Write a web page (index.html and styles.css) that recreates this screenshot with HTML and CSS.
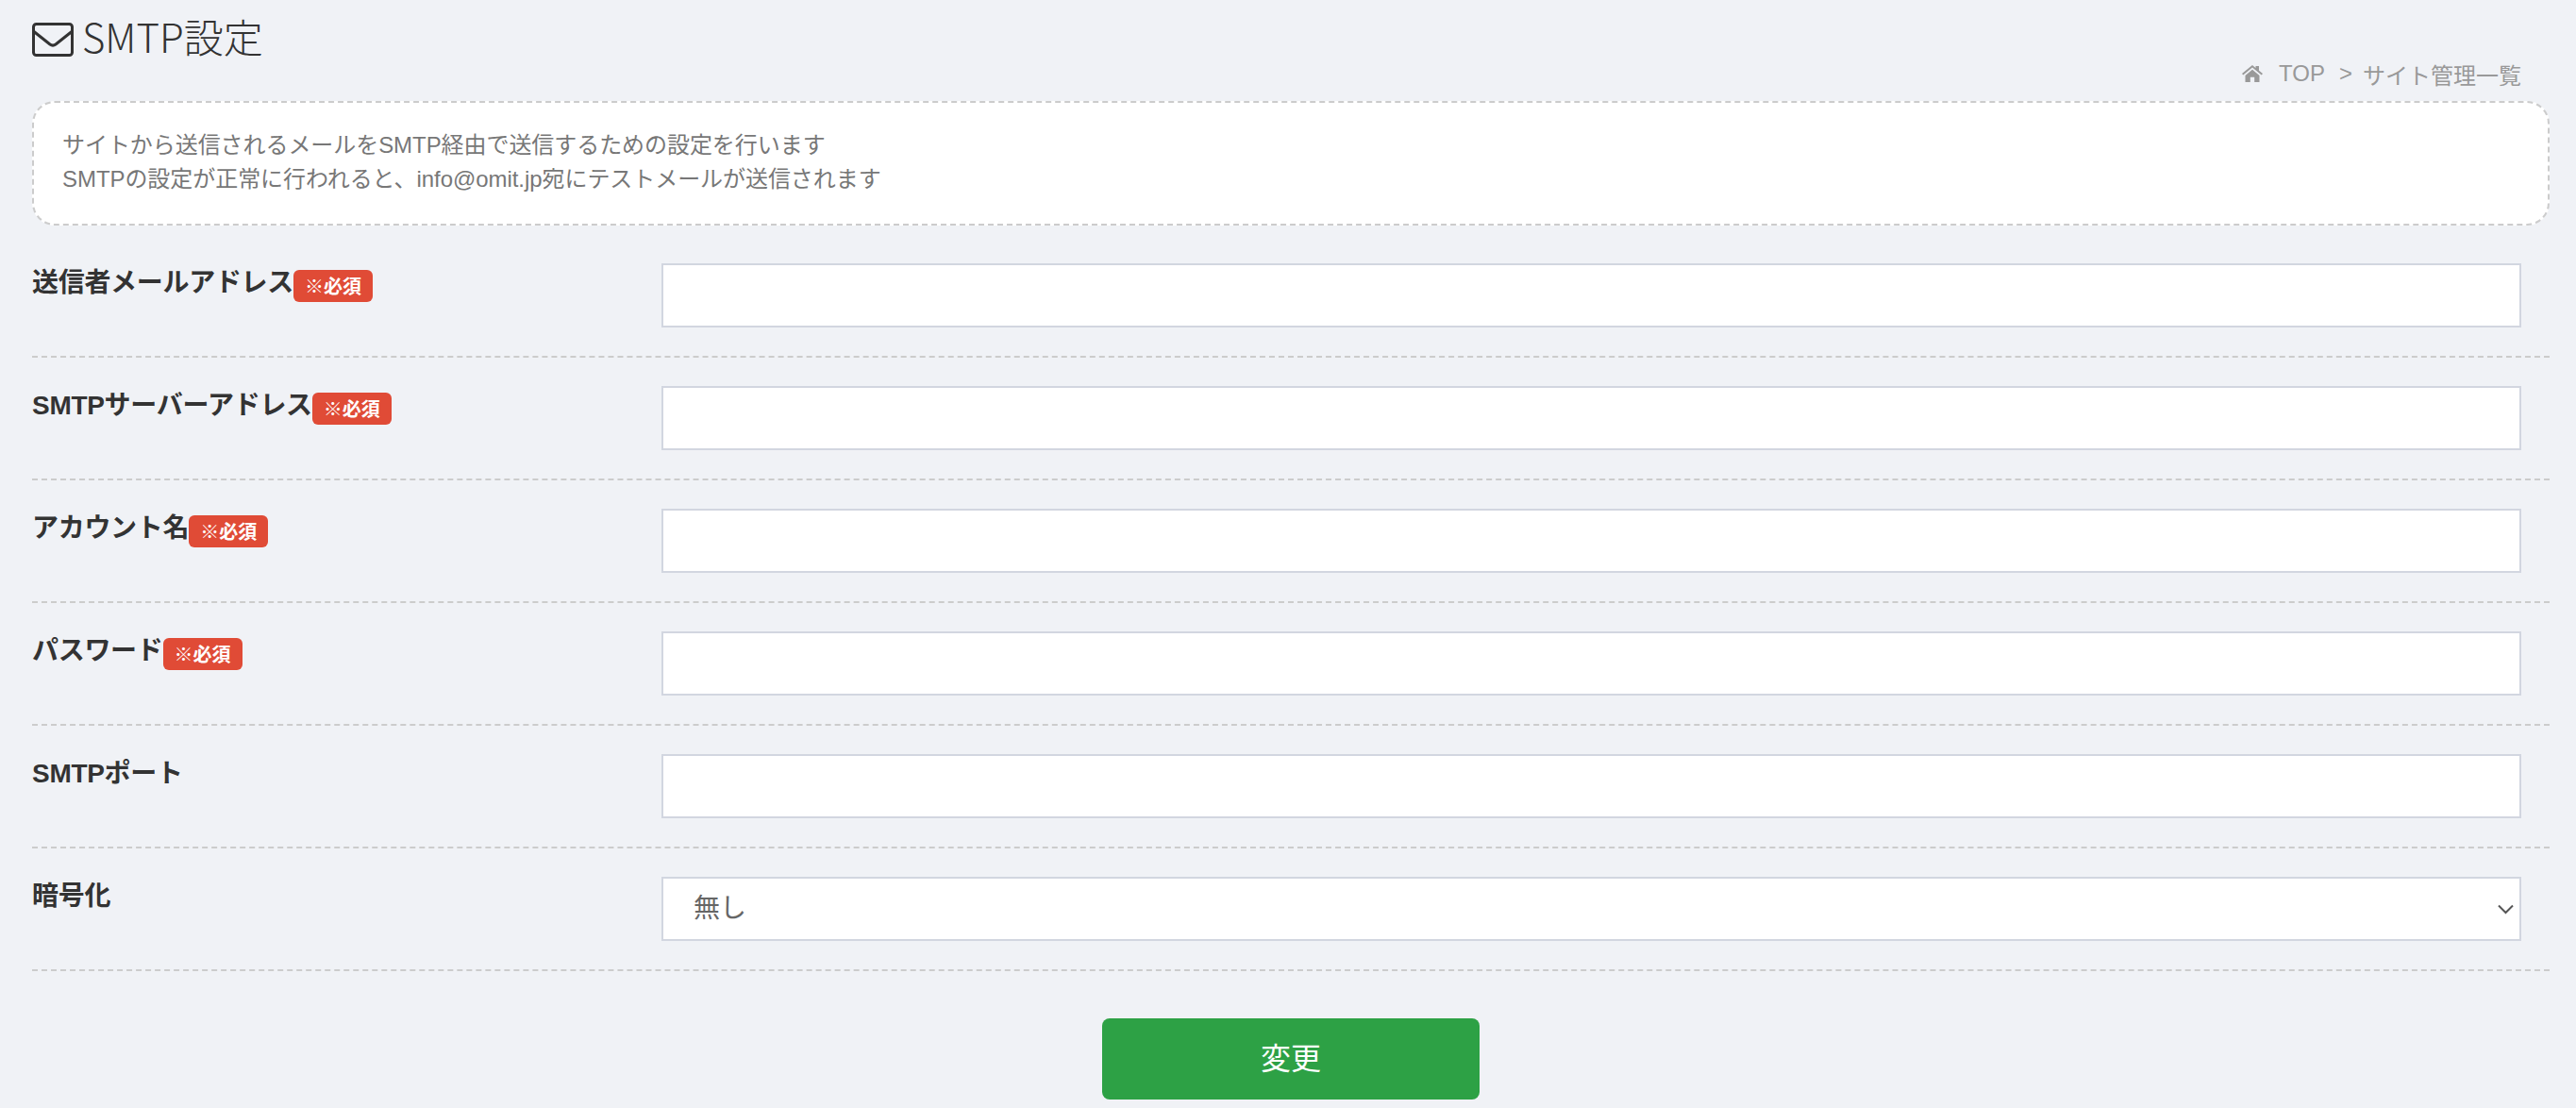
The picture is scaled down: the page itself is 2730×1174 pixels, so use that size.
FILE: index.html
```html
<!DOCTYPE html>
<html lang="ja">
<head>
<meta charset="utf-8">
<title>SMTP設定</title>
<link rel="stylesheet" href="styles.css">
</head>
<body>
<div class="page">
  <header class="head">
    <h1 class="title">
      <svg class="mail" width="44" height="36" viewBox="0 0 44 36" fill="none" stroke="#333" stroke-width="3" stroke-linejoin="round" stroke-linecap="round"><rect x="1.500" y="1.500" width="41" height="33" rx="3"/><path d="M2 9.500 19 23q3 2.200 6 0L42 9.500"/></svg>
      <span class="title-text">SMTP設定</span>
    </h1>
    <nav class="crumb">
      <svg class="home" width="22" height="18" viewBox="0 0 22 18"><path fill="#999" d="M11 0 14.500 2.900V1h3.500v4.800L22 9l-1.300 1.500L11 2.500 1.300 10.500 0 9zM3.500 11 11 4.800 18.500 11v7h-5.300v-5.300H8.800V18H3.500z"/></svg>
      <span class="crumb-top">TOP</span>
      <span class="crumb-sep">&gt;</span>
      <span>サイト管理一覧</span>
    </nav>
  </header>

  <div class="notice">
    <p>サイトから送信されるメールをSMTP経由で送信するための設定を行います</p>
    <p>SMTPの設定が正常に行われると、info@omit.jp宛にテストメールが送信されます</p>
  </div>

  <form class="form">
    <div class="row">
      <label class="label">送信者メールアドレス<span class="req">※必須</span></label>
      <input class="field" type="text">
    </div>
    <div class="row">
      <label class="label">SMTPサーバーアドレス<span class="req">※必須</span></label>
      <input class="field" type="text">
    </div>
    <div class="row">
      <label class="label">アカウント名<span class="req">※必須</span></label>
      <input class="field" type="text">
    </div>
    <div class="row">
      <label class="label">パスワード<span class="req">※必須</span></label>
      <input class="field" type="password">
    </div>
    <div class="row">
      <label class="label">SMTPポート</label>
      <input class="field" type="text">
    </div>
    <div class="row">
      <label class="label">暗号化</label>
      <div class="select-wrap">
        <select class="field select"><option>無し</option></select>
        <svg class="chev" width="17" height="11" viewBox="0 0 17 11" fill="none" stroke="#555" stroke-width="2"><path d="M1 1.500 8.500 9 16 1.500"/></svg>
      </div>
    </div>
    <div class="actions">
      <button class="submit" type="button">変更</button>
    </div>
  </form>
</div>
</body>
</html>
```

FILE: styles.css
```css
* { box-sizing: border-box; }
html, body { margin: 0; padding: 0; }
body {
  background: #f0f2f6;
  color: #333;
  font-family: "Liberation Sans", "Noto Sans CJK JP", sans-serif;
  height: 1174px;
  overflow: hidden;
}
.page { padding: 0 28px 0 34px; }

.head {
  display: flex;
  justify-content: space-between;
  height: 107px;
  padding-right: 30px;
}
.title {
  display: flex;
  align-items: center;
  gap: 9px;
  height: 84px;
  margin: 0;
  font-family: "Noto Sans CJK JP", sans-serif;
  font-size: 42px;
  font-weight: 300;
  line-height: 60px;
  color: #333;
}
.title-text { padding-bottom: 8px; }
.mail { display: block; }
.crumb {
  display: flex;
  align-items: center;
  height: 36px;
  margin-top: 60px;
  font-size: 24px;
  color: #999;
}
.home { margin-right: 17px; }
.crumb-top { margin-right: 15px; }
.crumb-sep { margin-right: 11px; }

.notice {
  height: 132px;
  padding: 27px 30px;
  margin-bottom: 10px;
  background: #fff;
  border: 2px dashed #ccc;
  border-radius: 24px;
  font-size: 24px;
  line-height: 36px;
  letter-spacing: -0.06px;
  color: #777;
}
.notice p { margin: 0; }

.row {
  display: grid;
  grid-template-columns: 667px 1fr;
  padding: 30px 30px 30px 0;
  border-bottom: 2px dashed #ccc;
}
.label {
  font-size: 28px;
  font-weight: 700;
  line-height: 42px;
  letter-spacing: -0.3px;
  color: #333;
}
.req {
  display: inline-block;
  height: 34px;
  padding: 0 12px;
  margin-top: 7px;
  vertical-align: top;
  background: #e04b36;
  border-radius: 6px;
  font-family: "Noto Sans CJK JP", sans-serif;
  font-size: 20px;
  line-height: 33px;
  letter-spacing: 0;
  color: #fff;
}
.field {
  display: block;
  width: 100%;
  height: 68px;
  margin: 0;
  padding: 0 32px 2px;
  background: #fff;
  border: 2px solid #d2d6e0;
  border-radius: 0;
  outline: none;
  font-family: inherit;
  font-size: 28px;
  color: #666;
}
.select-wrap { position: relative; }
.select { appearance: none; -webkit-appearance: none; }
.chev { position: absolute; right: 8px; top: 29px; pointer-events: none; }

.actions {
  display: flex;
  justify-content: center;
  margin-top: 50px;
}
.submit {
  width: 400px;
  height: 86px;
  padding: 0 0 7px;
  background: #2da145;
  border: 0;
  border-radius: 8px;
  font-family: inherit;
  font-size: 32px;
  color: #fff;
}
```
